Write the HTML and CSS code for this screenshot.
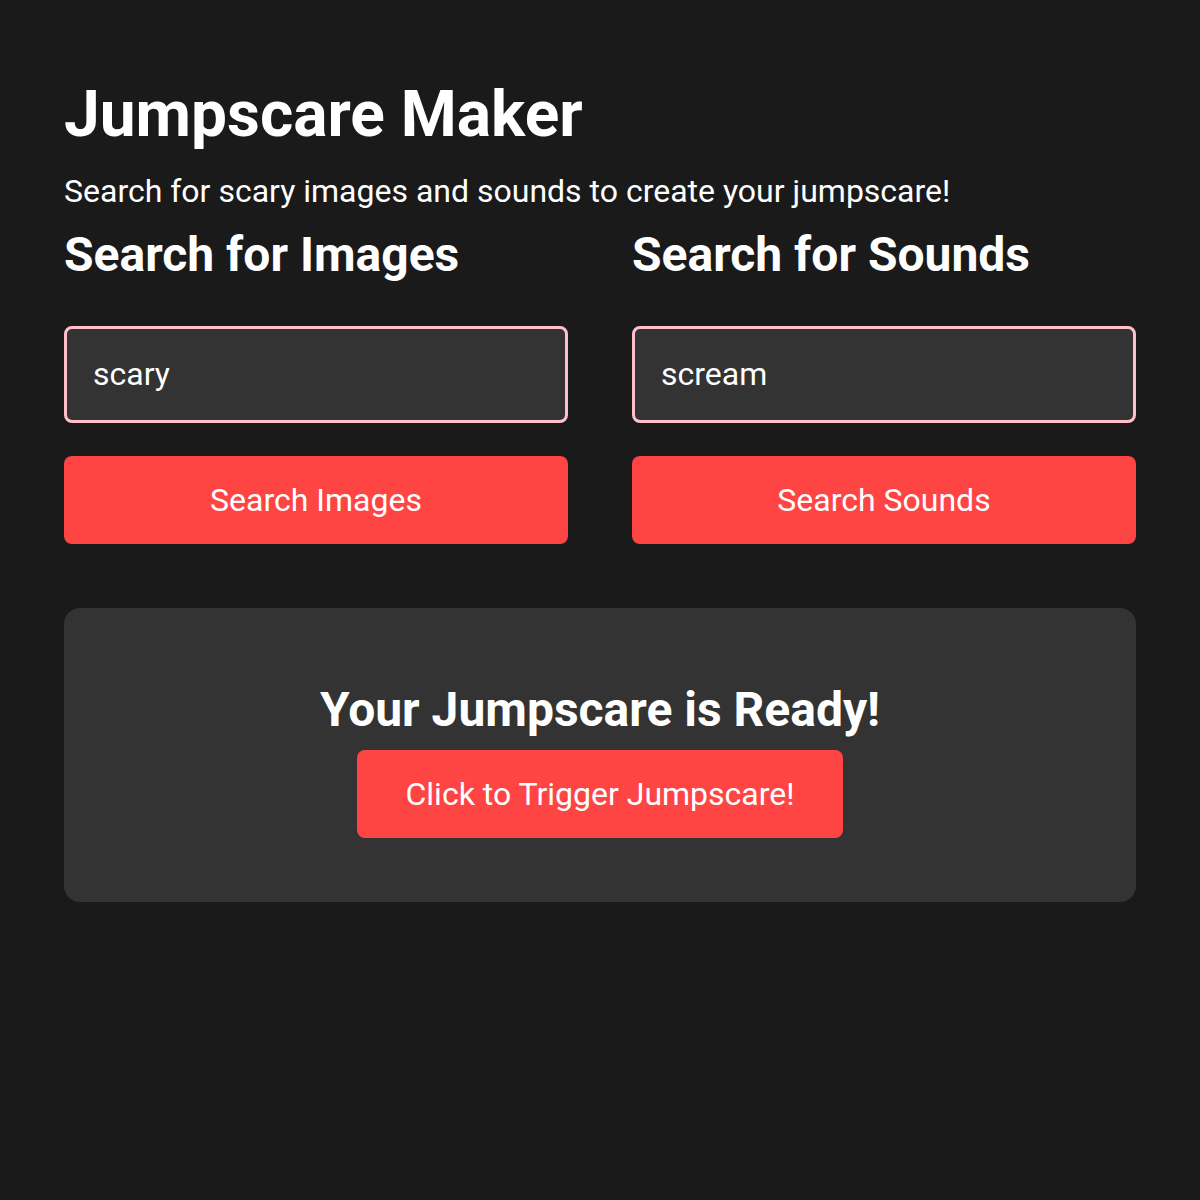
FILE: index.html
```html
<!DOCTYPE html>
<html lang="en">
<head>
<meta charset="utf-8">
<title>Jumpscare Maker</title>
<link rel="stylesheet" href="styles.css">
</head>
<body>
<main class="page">
  <h1 class="title">Jumpscare Maker</h1>
  <p class="subtitle">Search for scary images and sounds to create your jumpscare!</p>
  <div class="columns">
    <section class="column">
      <h2 class="col-title">Search for Images</h2>
      <input class="search-input" type="text" value="scary">
      <button class="btn btn-full">Search Images</button>
    </section>
    <section class="column">
      <h2 class="col-title">Search for Sounds</h2>
      <input class="search-input" type="text" value="scream">
      <button class="btn btn-full">Search Sounds</button>
    </section>
  </div>
  <section class="card">
    <h3 class="card-title">Your Jumpscare is Ready!</h3>
    <button class="btn btn-trigger">Click to Trigger Jumpscare!</button>
  </section>
</main>
</body>
</html>
```
FILE: styles.css
```css
* { box-sizing: border-box; }
html, body {
  margin: 0;
  background: #1a1a1a;
  color: #ffffff;
  font-family: Roboto, "Noto Sans", sans-serif;
}
.page {
  padding: 77px 64px 64px;
}
.title {
  margin: 0;
  font-size: 64px;
  font-weight: 700;
  line-height: 75px;
}
.subtitle {
  margin: 21px 0 0;
  font-size: 32px;
  font-weight: 400;
  line-height: 37.5px;
}
.columns {
  display: grid;
  grid-template-columns: 1fr 1fr;
  column-gap: 64px;
  margin-top: 16px;
}
.column {
  display: flex;
  flex-direction: column;
}
.col-title {
  margin: 0 0 43px;
  font-size: 48px;
  font-weight: 700;
  line-height: 56px;
}
.search-input {
  width: 100%;
  height: 97px;
  padding: 0 26px;
  background: #333333;
  border: 3px solid #ffc0cb;
  border-radius: 8px;
  color: #ffffff;
  font-family: Roboto, "Noto Sans", sans-serif;
  font-size: 32px;
  outline: none;
}
.btn {
  background: #ff4444;
  color: #ffffff;
  border: none;
  border-radius: 8px;
  font-family: Roboto, "Noto Sans", sans-serif;
  font-size: 32px;
  font-weight: 400;
  line-height: 40px;
  padding: 24px 48px;
  cursor: pointer;
}
.btn-full {
  width: 100%;
  margin-top: 33px;
}
.card {
  margin-top: 64px;
  background: #333333;
  border-radius: 16px;
  padding: 74px 64px 64px;
  display: flex;
  flex-direction: column;
  align-items: center;
}
.card-title {
  margin: 0 0 12px;
  font-size: 48px;
  font-weight: 700;
  line-height: 56px;
}
```
